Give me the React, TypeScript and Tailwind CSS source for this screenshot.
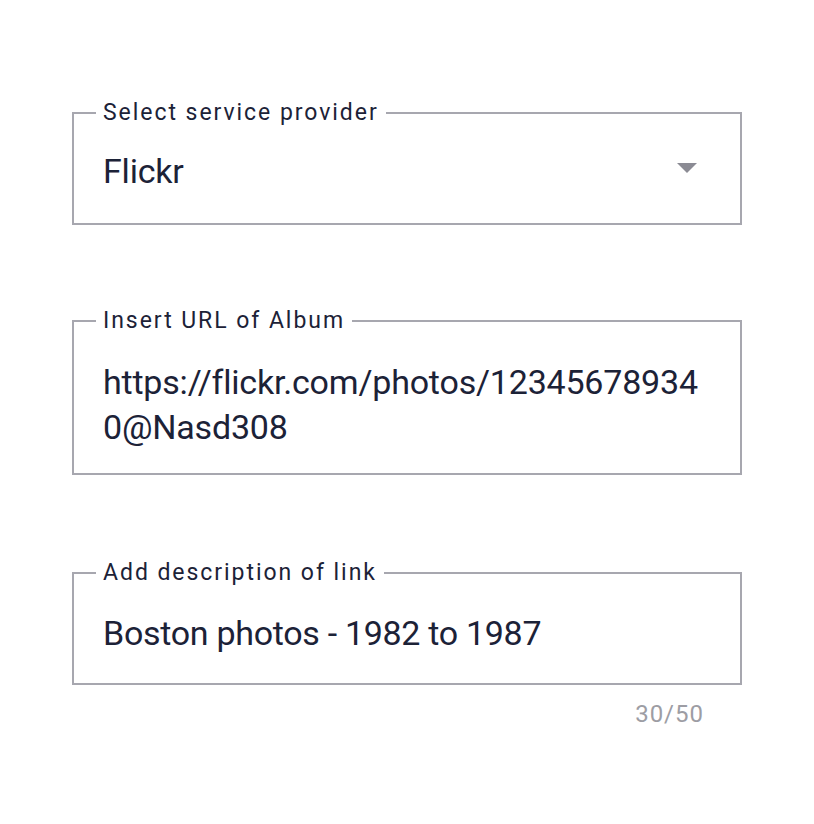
import React from "react";

const FONT = { fontFamily: "Roboto, 'Liberation Sans', sans-serif" };

function Field({
  label,
  children,
  className = "",
}: {
  label: string;
  children: React.ReactNode;
  className?: string;
}) {
  return (
    <fieldset className={`w-[670px] border-2 border-[#a7a7af] px-[22px] m-0 ${className}`}>
      <legend className="px-[7px] text-[23px] leading-[24px] tracking-[1.95px] text-[#1c2237]">{label}</legend>
      {children}
    </fieldset>
  );
}

export default function App() {
  return (
    <div className="min-h-[824px] w-full bg-white" style={FONT}>
      <div className="flex flex-col pl-[72px] pt-[101px]">
        <Field label="Select service provider">
          <div className="flex items-center justify-between pl-[7px] pr-[21px] pt-[26px] pb-[32px]">
            <span className="text-[34px] leading-[40px] tracking-[-0.2px] text-[#1c2237]">Flickr</span>
            <svg width="20" height="10" viewBox="0 0 20 10" className="mt-[-6px]">
              <path d="M0 0h20L10 10z" fill="#8b8b94" />
            </svg>
          </div>
        </Field>

        <Field label="Insert URL of Album" className="mt-[84px]">
          <div className="pl-[7px] pt-[27px] pb-[23px] text-[34px] leading-[45px] tracking-[-0.2px] text-[#1c2237] whitespace-nowrap">
            https://flickr.com/photos/12345678934
            <br />
            0@Nasd308
          </div>
        </Field>

        <Field label="Add description of link" className="mt-[86px]">
          <div className="pl-[7px] pt-[28px] pb-[30px] text-[34px] leading-[40px] tracking-[-0.3px] text-[#1c2237]">
            Boston photos - 1982 to 1987
          </div>
        </Field>

        <div className="w-[670px] flex justify-end pr-[38px] pt-[14px]">
          <span className="text-[24px] leading-[30px] tracking-[1px] text-[#9d9da4]">30/50</span>
        </div>
      </div>
    </div>
  );
}
